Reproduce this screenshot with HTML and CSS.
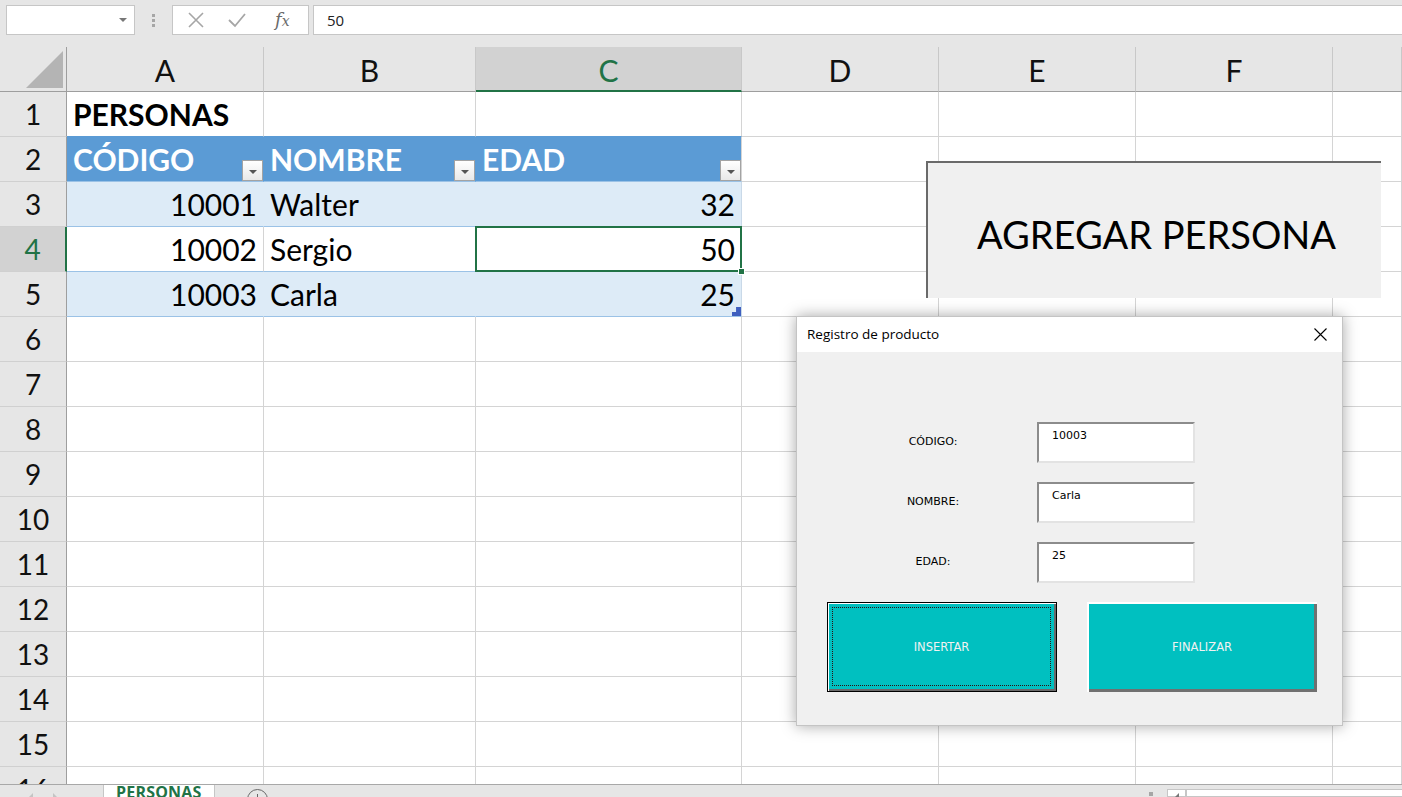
FILE: index.html
```html
<!DOCTYPE html>
<html lang="es">
<head>
<meta charset="utf-8">
<title>PERSONAS - Excel</title>
<link rel="stylesheet" href="styles.css">
</head>
<body>
<div class="app">
  <div class="formula-bar">
    <div class="name-box"><span class="nb-arrow"></span></div>
    <div class="fb-dots"><i></i><i></i><i></i></div>
    <div class="fb-buttons">
      <svg class="fb-ico" width="18" height="18" viewBox="0 0 18 18"><path d="M2 2 L16 16 M16 2 L2 16" stroke="#a6a6a6" stroke-width="1.6" fill="none"/></svg>
      <svg class="fb-ico" width="20" height="18" viewBox="0 0 20 18"><path d="M2 9 L8 15 L18 3" stroke="#a6a6a6" stroke-width="1.8" fill="none"/></svg>
      <span class="fx">f<span class="fx-x">x</span></span>
    </div>
    <div class="fb-input">50</div>
  </div>

  <div class="sheet">
    <div class="grid">
      <div class="ch corner"><span class="corner-tri"></span></div>
      <div class="ch">A</div>
      <div class="ch">B</div>
      <div class="ch ch-sel">C</div>
      <div class="ch">D</div>
      <div class="ch">E</div>
      <div class="ch">F</div>
      <div class="ch"></div>

      <div class="rh">1</div>
      <div class="c bold above-head">PERSONAS</div>
      <div class="c above-head"></div>
      <div class="c above-head"></div>
      <div class="c"></div><div class="c"></div><div class="c"></div><div class="c"></div>

      <div class="rh">2</div>
      <div class="c th"><span>CÓDIGO</span><span class="filter"></span></div>
      <div class="c th"><span>NOMBRE</span><span class="filter"></span></div>
      <div class="c th th-last"><span>EDAD</span><span class="filter"></span></div>
      <div class="c"></div><div class="c"></div><div class="c"></div><div class="c"></div>

      <div class="rh">3</div>
      <div class="c band num">10001</div>
      <div class="c band">Walter</div>
      <div class="c band num last">32</div>
      <div class="c"></div><div class="c"></div><div class="c"></div><div class="c"></div>

      <div class="rh rh-sel">4</div>
      <div class="c plain num">10002</div>
      <div class="c plain">Sergio</div>
      <div class="c plain num selected">50<span class="fill-handle"></span></div>
      <div class="c"></div><div class="c"></div><div class="c"></div><div class="c"></div>

      <div class="rh">5</div>
      <div class="c band num">10003</div>
      <div class="c band">Carla</div>
      <div class="c band num last">25<span class="resize-handle"></span></div>
      <div class="c"></div><div class="c"></div><div class="c"></div><div class="c"></div>

      <div class="rh">6</div><div class="c"></div><div class="c"></div><div class="c"></div><div class="c"></div><div class="c"></div><div class="c"></div><div class="c"></div>
      <div class="rh">7</div><div class="c"></div><div class="c"></div><div class="c"></div><div class="c"></div><div class="c"></div><div class="c"></div><div class="c"></div>
      <div class="rh">8</div><div class="c"></div><div class="c"></div><div class="c"></div><div class="c"></div><div class="c"></div><div class="c"></div><div class="c"></div>
      <div class="rh">9</div><div class="c"></div><div class="c"></div><div class="c"></div><div class="c"></div><div class="c"></div><div class="c"></div><div class="c"></div>
      <div class="rh">10</div><div class="c"></div><div class="c"></div><div class="c"></div><div class="c"></div><div class="c"></div><div class="c"></div><div class="c"></div>
      <div class="rh">11</div><div class="c"></div><div class="c"></div><div class="c"></div><div class="c"></div><div class="c"></div><div class="c"></div><div class="c"></div>
      <div class="rh">12</div><div class="c"></div><div class="c"></div><div class="c"></div><div class="c"></div><div class="c"></div><div class="c"></div><div class="c"></div>
      <div class="rh">13</div><div class="c"></div><div class="c"></div><div class="c"></div><div class="c"></div><div class="c"></div><div class="c"></div><div class="c"></div>
      <div class="rh">14</div><div class="c"></div><div class="c"></div><div class="c"></div><div class="c"></div><div class="c"></div><div class="c"></div><div class="c"></div>
      <div class="rh">15</div><div class="c"></div><div class="c"></div><div class="c"></div><div class="c"></div><div class="c"></div><div class="c"></div><div class="c"></div>
      <div class="rh">16</div><div class="c"></div><div class="c"></div><div class="c"></div><div class="c"></div><div class="c"></div><div class="c"></div><div class="c"></div>
    </div>

    <div class="shape-btn">AGREGAR PERSONA</div>

    <div class="dialog">
      <div class="dlg-title">
        <span>Registro de producto</span>
        <svg class="dlg-close" width="13" height="13" viewBox="0 0 13 13"><path d="M0.5 0.5 L12.5 12.5 M12.5 0.5 L0.5 12.5" stroke="#000" stroke-width="1.1" fill="none"/></svg>
      </div>
      <div class="dlg-body">
        <div class="form">
          <div class="lbl">CÓDIGO:</div><div class="tbox">10003</div>
          <div class="lbl">NOMBRE:</div><div class="tbox">Carla</div>
          <div class="lbl">EDAD:</div><div class="tbox">25</div>
        </div>
        <div class="btn-row">
          <div class="vbtn vbtn-focus"><div class="focus-rect">INSERTAR</div></div>
          <div class="vbtn">FINALIZAR</div>
        </div>
      </div>
    </div>
  </div>

  <div class="tabbar">
    <div class="tab-nav"><span class="nav-l"></span><span class="nav-r"></span></div>
    <div class="tab-active">PERSONAS</div>
    <div class="tab-add"><span class="plus-circle"></span></div>
    <div class="tab-spacer"></div>
    <div class="tab-dot"></div>
    <div class="hs-btn"><span class="hs-tri"></span></div>
    <div class="hscroll"></div>
  </div>
</div>
</body>
</html>
```

FILE: styles.css
```css
* { box-sizing: border-box; }
html, body { margin: 0; padding: 0; }
body {
  width: 1402px;
  height: 797px;
  overflow: hidden;
  background: #e6e6e6;
  font-family: "Lato", "Liberation Sans", sans-serif;
}
.app {
  display: flex;
  flex-direction: column;
  width: 1402px;
  height: 797px;
}

/* formula bar */
.formula-bar {
  height: 47px;
  flex: 0 0 47px;
  display: flex;
  align-items: flex-start;
  padding: 5px 0 0 6px;
  background: #e6e6e6;
}
.name-box {
  width: 129px;
  height: 30px;
  background: #fff;
  border: 1px solid #c6c6c6;
  position: relative;
  display: flex;
  justify-content: flex-end;
  align-items: center;
  padding-right: 7px;
}
.nb-arrow {
  width: 0; height: 0;
  border-left: 4px solid transparent;
  border-right: 4px solid transparent;
  border-top: 4px solid #777;
}
.fb-dots {
  width: 37px;
  height: 30px;
  display: flex;
  flex-direction: column;
  align-items: center;
  justify-content: center;
  gap: 2px;
}
.fb-dots i {
  display: block;
  width: 3px;
  height: 3px;
  background: #a6a6a6;
}
.fb-buttons {
  width: 137px;
  height: 30px;
  background: #fff;
  border: 1px solid #c6c6c6;
  display: flex;
  align-items: center;
  padding-left: 14px;
  gap: 22px;
}
.fx {
  font-family: "DejaVu Serif", "Liberation Serif", serif;
  font-style: italic;
  font-size: 18px;
  color: #6a6a6a;
  margin-left: 6px;
  margin-top: -2px;
}
.fx-x { font-size: 14px; }
.fb-input {
  flex: 1;
  margin-left: 4px;
  height: 30px;
  background: #fff;
  border: 1px solid #c6c6c6;
  border-right: none;
  font-family: "Open Sans", "Liberation Sans", sans-serif;
  font-size: 15px;
  line-height: 28px;
  padding-left: 13px;
  color: #222;
}

/* sheet */
.sheet {
  position: relative;
  flex: 1;
  overflow: hidden;
  background: #fff;
}
.grid {
  display: grid;
  grid-template-columns: 67px 197px 212px 266px 197px 197px 197px 1fr;
  grid-auto-rows: 45px;
}
.ch {
  background: #e6e6e6;
  border-right: 1px solid #c8c8c8;
  border-bottom: 1px solid #9e9e9e;
  display: flex;
  justify-content: center;
  align-items: center;
  padding-top: 2px;
  font-size: 30px;
  line-height: 1;
  color: #111;
}
.corner {
  border-right: 1px solid #9e9e9e;
  position: relative;
}
.corner-tri {
  position: absolute;
  right: 3px;
  bottom: 3px;
  width: 37px;
  height: 37px;
  background: #b4b4b4;
  clip-path: polygon(100% 0, 100% 100%, 0 100%);
}
.ch-sel {
  background: #d2d2d2;
  color: #217346;
  border-bottom: 2px solid #217346;
}
.rh {
  background: #e6e6e6;
  border-right: 1px solid #9e9e9e;
  border-bottom: 1px solid #d0d0d0;
  display: flex;
  justify-content: center;
  align-items: flex-end;
  padding-bottom: 8px;
  font-size: 28px;
  line-height: 1;
  color: #111;
}
.rh-sel {
  background: #d2d2d2;
  color: #217346;
  border-right: 2px solid #217346;
}
.c {
  border-right: 1px solid #d4d4d4;
  border-bottom: 1px solid #d4d4d4;
  display: flex;
  align-items: flex-end;
  padding: 0 6px 7px 6px;
  font-size: 30px;
  line-height: 1;
  color: #000;
  white-space: nowrap;
  position: relative;
}
.bold { font-weight: 700; }
.above-head { border-bottom-color: #5b9bd5; }
.num { justify-content: flex-end; }
.th {
  background: #5b9bd5;
  border-right-color: #5b9bd5;
  border-bottom-color: #9bc2e6;
  color: #fff;
  font-weight: 700;
  justify-content: space-between;
  padding: 0 0 0 6px;
}
.th > span:first-child { padding-bottom: 7px; }
.th-last { border-right-color: #d4d4d4; }
.filter {
  width: 21px;
  height: 21px;
  background: linear-gradient(#ffffff, #e9e9e9);
  border: 1px solid #a3a3a3;
  display: flex;
  justify-content: center;
  align-items: center;
}
.filter::after {
  content: "";
  width: 0; height: 0;
  margin-top: 3px;
  border-left: 4px solid transparent;
  border-right: 4px solid transparent;
  border-top: 4px solid #555;
}
.band {
  background: #ddebf7;
  border-right-color: #ddebf7;
  border-bottom-color: #9bc2e6;
}
.band.last { border-right-color: #c9d9e8; }
.plain { border-bottom-color: #9bc2e6; }
.selected::before {
  content: "";
  position: absolute;
  left: -1px;
  top: -1px;
  right: -1px;
  bottom: -1px;
  border: 2px solid #217346;
}
.fill-handle {
  position: absolute;
  right: -4px;
  bottom: -4px;
  width: 7px;
  height: 7px;
  background: #217346;
  border: 1px solid #fff;
  z-index: 2;
}
.resize-handle {
  position: absolute;
  right: 0;
  bottom: 0;
  width: 9px;
  height: 9px;
  background: #3f5fbf;
  clip-path: polygon(100% 0, 100% 100%, 0 100%, 0 55%, 45% 55%, 45% 0);
}

/* shape button */
.shape-btn {
  position: absolute;
  left: 926px;
  top: 114px;
  width: 455px;
  height: 137px;
  background: #f0f0f0;
  border-left: 2px solid #6a6a6a;
  border-top: 2px solid #6a6a6a;
  display: flex;
  justify-content: center;
  align-items: center;
  font-size: 38px;
  color: #000;
  padding-top: 6px;
  padding-left: 4px;
}

/* dialog */
.dialog {
  position: absolute;
  left: 796px;
  top: 269px;
  width: 547px;
  height: 410px;
  background: #f0f0f0;
  border: 1px solid #c4c4c4;
  box-shadow: 0 0 14px rgba(0, 0, 0, 0.35);
  display: flex;
  flex-direction: column;
}
.dlg-title {
  height: 35px;
  flex: 0 0 35px;
  background: #fff;
  display: flex;
  justify-content: space-between;
  align-items: center;
  padding: 0 15px 0 10px;
  font-family: "Open Sans", "Noto Sans", sans-serif;
  font-size: 13.5px;
  color: #000;
}
.dlg-title span { margin-top: -2px; }
.dlg-body {
  flex: 1;
  display: flex;
  flex-direction: column;
  padding: 70px 0 0 30px;
  font-family: "DejaVu Sans", "Liberation Sans", sans-serif;
  font-size: 11px;
}
.form {
  display: grid;
  grid-template-columns: 150px 158px;
  grid-auto-rows: 41px;
  row-gap: 19px;
  margin-left: 60px;
}
.lbl {
  display: flex;
  align-items: center;
  justify-content: center;
  width: 92px;
  padding-bottom: 3px;
  color: #000;
}
.tbox {
  background: #fff;
  border: 2px solid;
  border-color: #8c8c8c #e3e3e3 #e3e3e3 #8c8c8c;
  padding: 5px 13px;
  line-height: 13px;
  color: #000;
}
.btn-row {
  display: flex;
  gap: 30px;
  margin-top: 19px;
}
.vbtn {
  width: 230px;
  height: 90px;
  background: #00c0c0;
  box-shadow: inset 2px 2px #ffffff, inset -3px -3px #707070;
  display: flex;
  justify-content: center;
  align-items: center;
  color: #f2f2f2;
  font-size: 11.5px;
}
.vbtn-focus {
  border: 1px solid #000;
  box-shadow: inset 1px 1px #ffffff, inset -2px -2px #6a6a6a;
  padding: 4px 5px 5px 4px;
}
.focus-rect {
  width: 100%;
  height: 100%;
  border: 1px dotted #301010;
  display: flex;
  justify-content: center;
  align-items: center;
}

/* tab bar */
.tabbar {
  flex: 0 0 13px;
  height: 13px;
  background: #e6e6e6;
  border-top: 1px solid #a8a8a8;
  display: flex;
  overflow: hidden;
}
.tab-nav {
  width: 103px;
  display: flex;
  gap: 20px;
  padding: 8px 0 0 28px;
}
.nav-l, .nav-r {
  width: 0; height: 0;
  border-top: 5px solid transparent;
  border-bottom: 5px solid transparent;
}
.nav-l { border-right: 5px solid #c4c4c4; }
.nav-r { border-left: 5px solid #c4c4c4; }
.tab-active {
  width: 112px;
  background: #fff;
  border-left: 1px solid #c6c6c6;
  border-right: 1px solid #c6c6c6;
  margin-top: -1px;
  font-family: "Open Sans", "Liberation Sans", sans-serif;
  font-weight: 700;
  font-size: 16px;
  color: #217346;
  padding: 0 0 0 12px;
  line-height: 1;
  letter-spacing: 0.2px;
}
.tab-add {
  width: 70px;
  padding: 4px 0 0 32px;
}
.plus-circle {
  display: block;
  width: 21px;
  height: 21px;
  border: 1px solid #666;
  border-radius: 50%;
  position: relative;
}
.plus-circle::before {
  content: "";
  position: absolute;
  left: 9px;
  top: 4px;
  width: 1px;
  height: 11px;
  background: #666;
}
.tab-spacer { flex: 1; }
.tab-dot {
  width: 4px;
  height: 4px;
  background: #a6a6a6;
  margin: 7px 14px 0 0;
}
.hs-btn {
  width: 19px;
  margin-top: 4px;
  background: #fff;
  border: 1px solid #c6c6c6;
  display: flex;
  justify-content: center;
  padding-top: 3px;
}
.hs-tri {
  width: 0; height: 0;
  border-bottom: 4px solid #777;
  border-left: 4px solid transparent;
}
.hscroll {
  width: 216px;
  margin-top: 4px;
  background: #fff;
  border: 1px solid #c6c6c6;
  border-right: none;
}
```
